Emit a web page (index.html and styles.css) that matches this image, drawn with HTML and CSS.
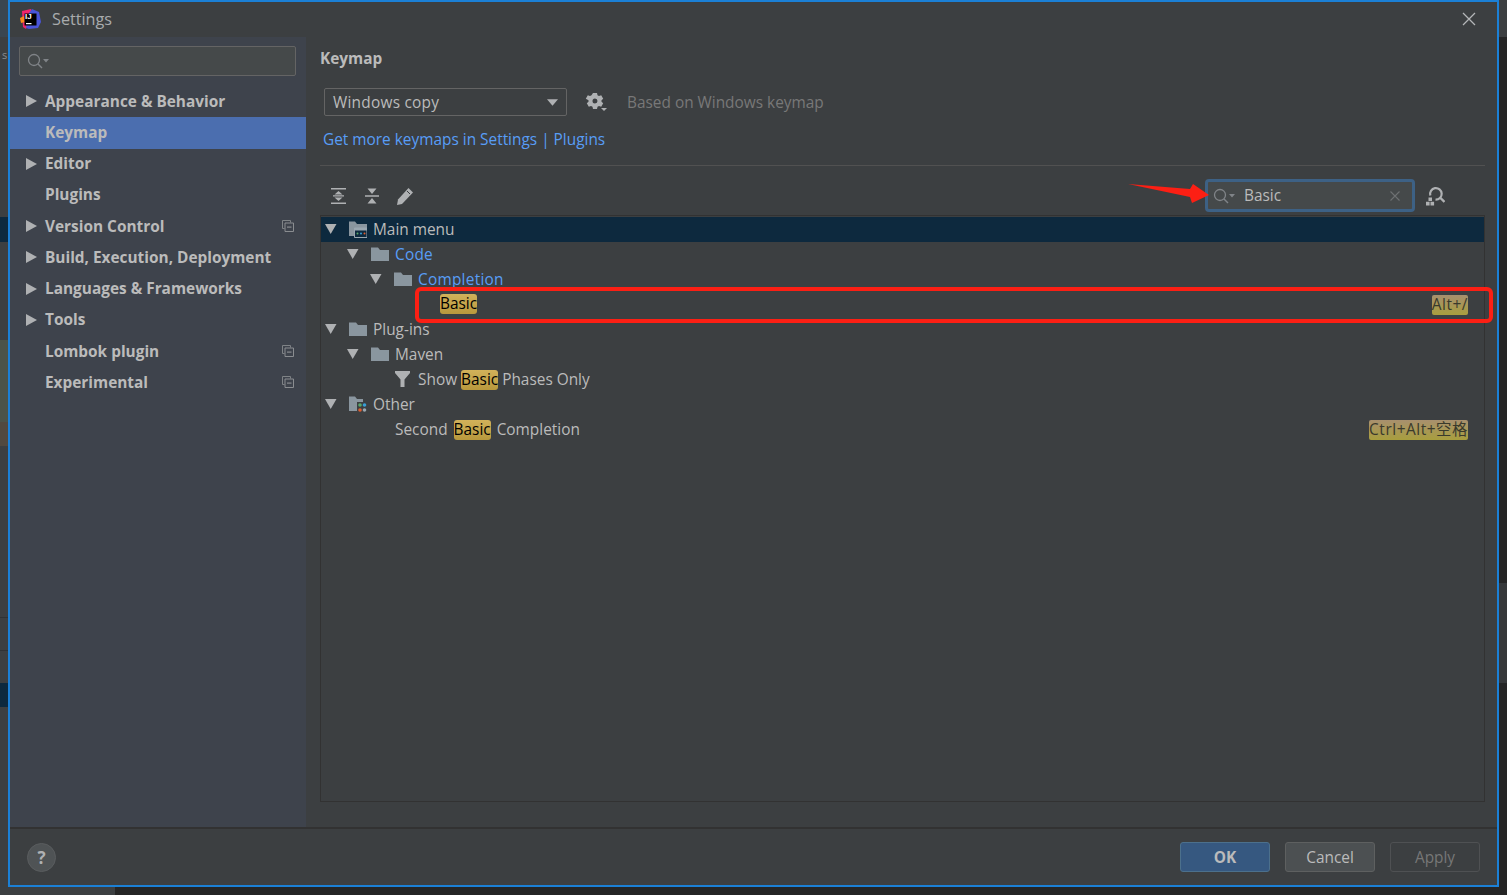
FILE: index.html
```html
<!DOCTYPE html>
<html lang="en">
<head>
<meta charset="utf-8">
<title>Settings</title>
<link rel="stylesheet" href="styles.css">
</head>
<body>
<svg class="defs" width="0" height="0" aria-hidden="true">
  <defs>
    <symbol id="folder" viewBox="0 0 18 16"><path d="M0 1.500h7l2 2.500h9v11H0z" fill="#8a969f"/></symbol>
    <symbol id="tri-r" viewBox="0 0 11 12"><path d="M0 0l11 6-11 6z" fill="#afb1b3"/></symbol>
    <symbol id="tri-d" viewBox="0 0 12 10"><path d="M0 0h11.500L5.700 10z" fill="#afb1b3"/></symbol>
    <symbol id="proj" viewBox="0 0 12 12"><path d="M.5.500h8v2M.5.500v8h2" fill="none" stroke="#7f8386"/><path d="M3 3h8.500v8.500H3z" fill="none" stroke="#8a8d90"/><path d="M5 6.500h4.500v1.200H5z" fill="#8a8d90"/></symbol>
    <symbol id="search" viewBox="0 0 24 16"><circle cx="7" cy="7" r="5.500" fill="none" stroke="#808488" stroke-width="1.300"/><path d="M11 11l4 4" stroke="#808488" stroke-width="1.500"/><path d="M16 6h6l-3 3.500z" fill="#808488"/></symbol>
  </defs>
</svg>
<div class="desktop">
  <div class="strip-left">
    <div class="sl sl-top"></div>
    <div class="sl sl-s"><span class="sl-glyph">s</span></div>
    <div class="sl sl-blue1"></div>
    <div class="sl sl-gray1"></div>
    <div class="sl sl-green"></div>
    <div class="sl sl-brown"></div>
    <div class="sl sl-gray2"></div>
    <div class="sl sl-gray3"></div>
    <div class="sl sl-gray3"></div>
    <div class="sl sl-blue2"></div>
    <div class="sl sl-gray4"></div>
  </div>

  <div class="dialog">
    <header class="titlebar">
      <svg class="logo" width="21" height="21" viewBox="0 0 21 21">
        <path d="M2 2l9-2 1 6-6 14-3-2z" fill="#f0256d"/>
        <path d="M12 0l7 3 2 10-3 6-9 1-3-1 3-15z" fill="#4a55d8"/>
        <path d="M0 9l4-2 1 6-4 1z" fill="#fb8a1c"/>
        <path d="M4.500 4.500h12v12h-12z" fill="#000"/>
        <path d="M6 14h5.500v1.200H6z" fill="#fff"/>
      </svg>
      <span class="logo-text">IJ</span>
      <span class="title">Settings</span>
      <svg class="close" width="14" height="14" viewBox="0 0 14 14"><path d="M1 1l12 12M13 1L1 13" stroke="#b4b6b8" stroke-width="1.300"/></svg>
    </header>

    <div class="content">
      <aside class="sidebar">
        <div class="side-search"><svg width="24" height="16"><use href="#search"/></svg></div>
        <nav class="nav">
          <div class="nav-row"><svg class="nav-tri" width="11" height="12"><use href="#tri-r"/></svg><span>Appearance &amp; Behavior</span></div>
          <div class="nav-row selected"><span>Keymap</span></div>
          <div class="nav-row"><svg class="nav-tri" width="11" height="12"><use href="#tri-r"/></svg><span>Editor</span></div>
          <div class="nav-row"><span>Plugins</span></div>
          <div class="nav-row"><svg class="nav-tri" width="11" height="12"><use href="#tri-r"/></svg><span>Version Control</span><svg class="nav-proj" width="12" height="12"><use href="#proj"/></svg></div>
          <div class="nav-row"><svg class="nav-tri" width="11" height="12"><use href="#tri-r"/></svg><span>Build, Execution, Deployment</span></div>
          <div class="nav-row"><svg class="nav-tri" width="11" height="12"><use href="#tri-r"/></svg><span>Languages &amp; Frameworks</span></div>
          <div class="nav-row"><svg class="nav-tri" width="11" height="12"><use href="#tri-r"/></svg><span>Tools</span></div>
          <div class="nav-row"><span>Lombok plugin</span><svg class="nav-proj" width="12" height="12"><use href="#proj"/></svg></div>
          <div class="nav-row"><span>Experimental</span><svg class="nav-proj" width="12" height="12"><use href="#proj"/></svg></div>
        </nav>
      </aside>

      <main class="main">
        <h1 class="heading">Keymap</h1>
        <div class="scheme">
          <div class="combo"><span class="combo-text">Windows copy</span><svg width="11" height="7" viewBox="0 0 12 7"><path d="M0 0h12L6 7z" fill="#afb1b3"/></svg></div>
          <svg class="gear" width="22" height="20" viewBox="0 0 22 20">
            <path fill="#afb1b3" fill-rule="evenodd" d="M8 1h4l.5 2.300 1.500.8 2.200-.8 2 3.400-1.700 1.500v1.600l1.700 1.500-2 3.400-2.200-.8-1.500.8L12 17H8l-.5-2.300-1.500-.8-2.200.8-2-3.400 1.700-1.500V8.200L.8 6.700l2-3.400 2.200.8 1.500-.8zM10 6.500a2.500 2.500 0 1 0 0 5 2.500 2.500 0 0 0 0-5z"/>
            <path fill="#afb1b3" d="M16 16h6l-3 3z"/>
          </svg>
          <span class="based">Based on Windows keymap</span>
        </div>
        <div class="more"><a class="link">Get more keymaps in Settings | Plugins</a></div>
        <div class="toolbar">
          <div class="tools">
            <svg width="18" height="18" viewBox="0 0 18 18" fill="#afb1b3"><path d="M1 1h15v1.600H1zM1 15.400h15V17H1zM8.500 4l4 3.500h-8zM8.500 14l-4-3.500h8zM3 8.300h11v1.300H3z"/></svg>
            <svg width="18" height="18" viewBox="0 0 18 18" fill="#afb1b3"><path d="M2 8.300h14v1.400H2zM4.500 1.500h9L9 7zM9 11l4.500 5.500h-9z"/></svg>
            <svg width="18" height="18" viewBox="0 0 18 18" fill="#afb1b3"><path d="M12.500 1l4.500 4.500L6 17l-5 1 1-5.500z"/><path d="M11 4l3 3" stroke="#3c3f41"/></svg>
          </div>
          <div class="filter">
            <svg width="24" height="16"><use href="#search"/></svg>
            <span class="filter-text">Basic</span>
            <svg class="filter-x" width="10" height="10" viewBox="0 0 10 10"><path d="M.5.500l9 9M9.500.500l-9 9" stroke="#6e7173" stroke-width="1.100"/></svg>
          </div>
          <svg class="shortcut-find" width="20" height="20" viewBox="0 0 20 20"><path d="M5.300 9.500A5.800 5.800 0 1 1 10.500 13.700" fill="none" stroke="#afb1b3" stroke-width="2.200"/><path d="M15 11.500l4.500 4.500" stroke="#afb1b3" stroke-width="2.400"/><path d="M3.500 11.500h3.500V15H3.500zM1 15.800h3.600v3.600H1zM5.500 15.800h3.600v3.600H5.500z" fill="#afb1b3"/></svg>
        </div>
        <div class="tree">
          <div class="row row-selected lv0"><svg class="tw" width="12" height="10"><use href="#tri-d"/></svg>
            <svg class="ic" width="18" height="18" viewBox="0 0 18 18"><path d="M0 1.500h6l2 2.500h10v4H6v8H0z" fill="#8a969f"/><path d="M5.500 8h12.500v9.500H5.500z" fill="#0d293e" stroke="#9aa7b0"/><path d="M5.500 8h12.500v2.500H5.500z" fill="#9aa7b0"/><circle cx="8.500" cy="13.500" r="1" fill="#59a869"/><circle cx="12" cy="13.500" r="1" fill="#389fd6"/><circle cx="15.500" cy="13.500" r="1" fill="#e05c2e"/></svg>
            <span>Main menu</span></div>
          <div class="row lv1"><svg class="tw" width="12" height="10"><use href="#tri-d"/></svg><svg class="ic" width="18" height="16"><use href="#folder"/></svg><span class="blue">Code</span></div>
          <div class="row lv2"><svg class="tw" width="12" height="10"><use href="#tri-d"/></svg><svg class="ic" width="18" height="16"><use href="#folder"/></svg><span class="blue">Completion</span></div>
          <div class="row lv3"><mark class="hit">Basic</mark><span class="keys"><mark class="key">Alt+/</mark></span></div>
          <div class="row lv0"><svg class="tw" width="12" height="10"><use href="#tri-d"/></svg><svg class="ic" width="18" height="16"><use href="#folder"/></svg><span>Plug-ins</span></div>
          <div class="row lv1"><svg class="tw" width="12" height="10"><use href="#tri-d"/></svg><svg class="ic" width="18" height="16"><use href="#folder"/></svg><span>Maven</span></div>
          <div class="row lvf"><svg class="ic" width="18" height="16" viewBox="0 0 18 16"><path d="M1 0h15v2l-5.500 6.500V16h-4V8.500L1 2z" fill="#afb1b3"/></svg><span>Show <mark class="hit">Basic</mark> Phases Only</span></div>
          <div class="row lv0"><svg class="tw" width="12" height="10"><use href="#tri-d"/></svg>
            <svg class="ic" width="18" height="18" viewBox="0 0 18 18"><path d="M0 1.500h6l2 2.500h6v3H8v9H0z" fill="#8a969f"/><circle cx="11" cy="10" r="1.800" fill="#59a869"/><circle cx="15.500" cy="10" r="1.800" fill="#389fd6"/><circle cx="11" cy="15" r="1.800" fill="#e05c2e"/><circle cx="15.500" cy="15" r="1.800" fill="#9aa7b0"/></svg>
            <span>Other</span></div>
          <div class="row lvs"><span>Second <mark class="hit">Basic</mark> Completion</span><span class="keys"><mark class="key">Ctrl+Alt+空格</mark></span></div>
        </div>
      </main>
    </div>

    <footer class="footer">
      <button class="help">?</button>
      <div class="actions">
        <button class="btn btn-ok">OK</button>
        <button class="btn btn-cancel">Cancel</button>
        <button class="btn btn-apply">Apply</button>
      </div>
    </footer>

    <div class="note-box"></div>
    <svg class="note-arrow" width="84" height="26" viewBox="0 0 84 26"><path d="M0 2l62 5 3-5 16 11-17 8 -2-6z" fill="#fc1f14"/></svg>
  </div>

  <div class="strip-right">
    <div class="sr sr-top"></div>
    <div class="sr sr-dark1"></div>
    <div class="sr sr-mid"></div>
    <div class="sr sr-dark2"></div>
  </div>
</div>
<div class="strip-bottom"><div class="sb-left"></div><div class="sb-right"></div></div>
</body>
</html>
```

FILE: styles.css
```css
* { box-sizing: border-box; }
html, body { margin: 0; padding: 0; height: 100%; overflow: hidden; }
body {
  background: #252525;
  color: #bbbbbb;
  font-family: "Open Sans", "Noto Sans CJK SC", sans-serif;
  font-size: 15.4px;
}
.defs { position: absolute; }

.desktop { display: flex; height: 887px; }

.strip-left { width: 8px; display: flex; flex-direction: column; flex: none; overflow: hidden; }
.sl { flex: none; }
.sl-top { height: 37px; background: #3a4650; }
.sl-s { height: 180px; background: #3c3f41; color: #8a8d90; font-size: 11px; line-height: 12px; padding-top: 12px; padding-left: 2px; }
.sl-glyph { display: block; }
.sl-blue1 { height: 25px; background: #0d293e; }
.sl-gray1 { height: 98px; background: #3c3f41; }
.sl-green { height: 82px; background: #4b5349; }
.sl-brown { height: 24px; background: #51493f; }
.sl-gray2 { height: 171px; background: #3c3f41; }
.sl-gray3 { height: 33px; background: #3c3f41; border-top: 1px solid #303234; }
.sl-blue2 { height: 24px; background: #0d293e; }
.sl-gray4 { flex: 1; background: #3c3f41; }

.strip-right { width: 8px; display: flex; flex-direction: column; flex: none; }
.sr { flex: none; }
.sr-top { height: 37px; background: #3c3f41; }
.sr-dark1 { height: 546px; background: #252525; }
.sr-mid { height: 100px; background: #36383a; }
.sr-dark2 { flex: 1; background: #252525; }

.strip-bottom { display: flex; height: 8px; }
.sb-left { width: 115px; background: #3c3f41; }
.sb-right { flex: 1; background: #252525; }

.dialog {
  position: relative;
  width: 1491px;
  flex: none;
  display: flex;
  flex-direction: column;
  background: #3c3f41;
  border: 2px solid #1b80d6;
}

.titlebar { position: relative; height: 35px; display: flex; align-items: center; padding-left: 10px; padding-bottom: 2px; flex: none; }
.logo { flex: none; margin-top: 2px; }
.logo-text {
  position: absolute;
  left: 15px;
  top: 10px;
  font: bold 8px/10px "Liberation Sans", sans-serif;
  color: #fff;
}
.title { margin-left: 11px; color: #a9abad; font-size: 16.2px; }
.close { margin-left: auto; margin-right: 21px; }

.content { flex: 1; display: flex; min-height: 0; }

.sidebar { width: 296px; flex: none; background: #3e434c; display: flex; flex-direction: column; padding-top: 9px; }
.side-search {
  margin: 0 10px 0 9px;
  height: 30px;
  background: #45494a;
  border: 1px solid #646464;
  border-radius: 2px;
  display: flex;
  align-items: center;
  padding-left: 7px;
}
.nav { margin-top: 10px; display: flex; flex-direction: column; }
.nav-row {
  position: relative;
  height: 31.25px;
  display: flex;
  align-items: center;
  padding-left: 35px;
  padding-bottom: 1px;
  font-weight: 700;
  color: #bbbbbb;
}
.nav-row.selected { background: #4b6eaf; }
.nav-tri { position: absolute; left: 16px; top: 9px; }
.nav-proj { margin-left: auto; margin-right: 12px; }

.main { flex: 1; min-width: 0; padding-left: 14px; padding-right: 12px; display: flex; flex-direction: column; }
.heading { margin: 11px 0 0; font-size: 15.4px; font-weight: 700; line-height: 22px; color: #bbbbbb; height: 22px; }
.scheme { display: flex; align-items: center; margin-top: 18px; padding-left: 4px; height: 28px; }
.combo {
  width: 243px;
  height: 28px;
  border: 1px solid #646464;
  border-radius: 2px;
  display: flex;
  align-items: center;
  justify-content: space-between;
  padding: 0 8px 0 8px;
  color: #bbbbbb;
}
.combo-text { letter-spacing: .25px; }
.gear { margin-left: 18px; flex: none; }
.based { margin-left: 20px; color: #787878; }
.more { margin-top: 11px; padding-left: 3px; height: 26px; line-height: 26px; }
.link { color: #589df6; }

.toolbar {
  margin-top: 12px;
  border-top: 1px solid #515151;
  height: 50px;
  display: flex;
  align-items: center;
  padding-left: 10px;
  padding-top: 10px;
  flex: none;
}
.tools { display: flex; gap: 15px; }
.filter {
  margin-left: auto;
  width: 210px;
  height: 33px;
  background: #45494a;
  border: 3px solid #3d6185;
  border-radius: 4px;
  display: flex;
  align-items: center;
  padding-left: 5px;
}
.filter-text { margin-left: 7px; color: #bbbbbb; }
.filter-x { margin-left: auto; margin-right: 12px; }
.shortcut-find { margin-left: 10px; margin-right: 40px; }

.tree {
  height: 587px;
  border: 1px solid #323232;
  padding-top: 1px;
  flex: none;
}
.row {
  height: 25px;
  display: flex;
  align-items: center;
  padding-bottom: 1px;
  color: #bbbbbb;
  white-space: pre;
}
.row-selected { background: #0d293e; }
.lv0 { padding-left: 4px; }
.lv1 { padding-left: 26px; }
.lv2 { padding-left: 49px; }
.lv3 { padding-left: 119px; }
.lvf { padding-left: 73px; }
.lvs { padding-left: 74px; word-spacing: 2px; }
.tw { width: 24px; padding-right: 12px; flex: none; }
.ic { flex: none; margin-right: 6px; }
.blue { color: #589df6; letter-spacing: .25px; }
.hit {
  background: linear-gradient(#d2b25a, #b8983c);
  color: #000;
  border-radius: 3px;
  line-height: 20px;
  display: inline-block;
  height: 20px;
}
.keys { margin-left: auto; margin-right: 16px; }
.key {
  background: linear-gradient(#a8906e, #a89e3e);
  color: #3a3a2c;
  border-radius: 2px;
  line-height: 20px;
  display: inline-block;
  height: 20px;
  letter-spacing: .55px;
}

.footer {
  height: 58px;
  flex: none;
  border-top: 2px solid #323232;
  display: flex;
  align-items: center;
  justify-content: space-between;
  padding: 0 17px 0 17px;
}
.help {
  width: 29px;
  height: 29px;
  padding: 0;
  border-radius: 50%;
  border: 1px solid #5a5d5f;
  background: #4f5355;
  color: #afb1b3;
  font: bold 17px/27px "Open Sans", sans-serif;
}
.actions { display: flex; gap: 15px; }
.btn {
  width: 90px;
  height: 30px;
  padding: 2px 0 0;
  border-radius: 3px;
  font: 15.4px/26px "Open Sans", sans-serif;
  color: #bbbbbb;
}
.btn-ok { background: #365880; border: 1px solid #4c708c; font-weight: 700; }
.btn-cancel { background: #4c5052; border: 1px solid #5e6060; }
.btn-apply { background: transparent; border: 1px solid #4f5153; color: #777777; }

.note-box {
  position: absolute;
  left: 405px;
  top: 285px;
  width: 1078px;
  height: 36px;
  border: 4px solid #fc1f14;
  border-radius: 6px;
}
.note-arrow { position: absolute; left: 1118px; top: 180px; }
```
